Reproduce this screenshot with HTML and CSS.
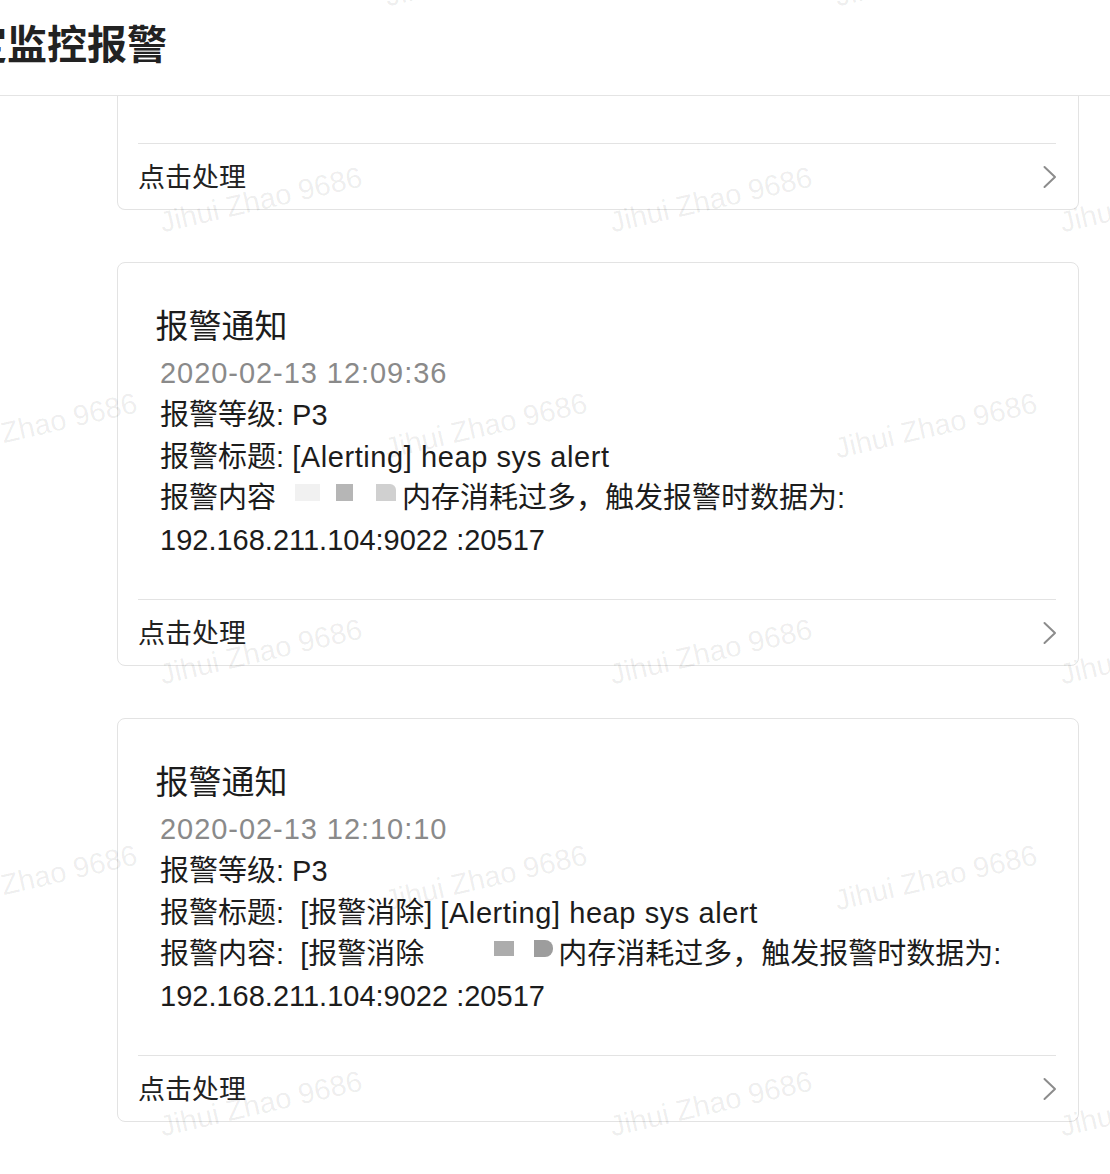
FILE: index.html
```html
<!DOCTYPE html>
<html lang="zh-CN">
<head>
<meta charset="utf-8">
<title>监控报警</title>
<link rel="stylesheet" href="styles.css">
</head>
<body>
<header class="topbar">
  <h1 class="title"><span class="cut">定</span>监控报警</h1>
</header>
<main class="list">
  <section class="card card-partial">
    <div class="card-body card-body-partial"></div>
    <div class="card-foot">
      <span class="foot-text">点击处理</span>
      <svg class="chev" width="14" height="24" viewBox="0 0 14 24"><path d="M1.5 2 L12 12 L1.5 22" fill="none" stroke="#8c8c8c" stroke-width="2" stroke-linecap="round" stroke-linejoin="round"/></svg>
    </div>
  </section>

  <section class="card">
    <div class="card-body">
      <h2 class="card-title">报警通知</h2>
      <p class="time">2020-02-13 12:09:36</p>
      <p class="line">报警等级: P3</p>
      <p class="line">报警标题: <span class="en">[Alerting] heap sys alert</span></p>
      <p class="line">报警内容<span class="mask mask-a"><span class="sq sq-a1"></span><span class="sq sq-a2"></span><span class="sq sq-a3"></span></span>内存消耗过多，触发报警时数据为:</p>
      <p class="line">192.168.211.104:9022 :20517</p>
    </div>
    <div class="card-foot">
      <span class="foot-text">点击处理</span>
      <svg class="chev" width="14" height="24" viewBox="0 0 14 24"><path d="M1.5 2 L12 12 L1.5 22" fill="none" stroke="#8c8c8c" stroke-width="2" stroke-linecap="round" stroke-linejoin="round"/></svg>
    </div>
  </section>

  <section class="card">
    <div class="card-body">
      <h2 class="card-title">报警通知</h2>
      <p class="time">2020-02-13 12:10:10</p>
      <p class="line">报警等级: P3</p>
      <p class="line">报警标题: <span class="tag">[报警消除]</span> <span class="en">[Alerting] heap sys alert</span></p>
      <p class="line">报警内容: <span class="tag">[报警消除</span><span class="mask mask-b"><span class="sq sq-b1"></span><span class="sq sq-b2"></span></span>内存消耗过多，触发报警时数据为:</p>
      <p class="line">192.168.211.104:9022 :20517</p>
    </div>
    <div class="card-foot">
      <span class="foot-text">点击处理</span>
      <svg class="chev" width="14" height="24" viewBox="0 0 14 24"><path d="M1.5 2 L12 12 L1.5 22" fill="none" stroke="#8c8c8c" stroke-width="2" stroke-linecap="round" stroke-linejoin="round"/></svg>
    </div>
  </section>
</main>

<div class="watermarks" aria-hidden="true">
  <span class="wm yb0 xb1">Jihui Zhao 9686</span>
  <span class="wm yb0 xb2">Jihui Zhao 9686</span>
  <span class="wm ya1 xa1">Jihui Zhao 9686</span>
  <span class="wm ya1 xa2">Jihui Zhao 9686</span>
  <span class="wm ya1 xa3">Jihui Zhao 9686</span>
  <span class="wm yb1 xb0">Jihui Zhao 9686</span>
  <span class="wm yb1 xb1">Jihui Zhao 9686</span>
  <span class="wm yb1 xb2">Jihui Zhao 9686</span>
  <span class="wm ya2 xa1">Jihui Zhao 9686</span>
  <span class="wm ya2 xa2">Jihui Zhao 9686</span>
  <span class="wm ya2 xa3">Jihui Zhao 9686</span>
  <span class="wm yb2 xb0">Jihui Zhao 9686</span>
  <span class="wm yb2 xb1">Jihui Zhao 9686</span>
  <span class="wm yb2 xb2">Jihui Zhao 9686</span>
  <span class="wm ya3 xa1">Jihui Zhao 9686</span>
  <span class="wm ya3 xa2">Jihui Zhao 9686</span>
  <span class="wm ya3 xa3">Jihui Zhao 9686</span>
</div>
</body>
</html>
```

FILE: styles.css
```css
* {
  box-sizing: border-box;
  margin: 0;
  padding: 0;
}

html, body {
  background: #ffffff;
}

body {
  position: relative;
  width: 1110px;
  height: 1174px;
  overflow: hidden;
  font-family: "Liberation Sans", "Noto Sans CJK SC", sans-serif;
  color: #1c1c1c;
}

/* header */
.topbar {
  height: 96px;
  border-bottom: 1px solid #e4e4e4;
  display: flex;
  align-items: center;
  overflow: hidden;
}

.title {
  font-size: 40px;
  font-weight: 700;
  line-height: 1;
  white-space: nowrap;
  color: #222222;
  margin-left: -33px;
  padding-bottom: 6px;
}

/* list */
.list {
  display: flex;
  flex-direction: column;
  gap: 52px;
  padding: 0 31px 0 117px;
}

.card {
  background: #ffffff;
  border: 1px solid #e3e3e3;
  border-radius: 8px;
}

.card-partial {
  border-top: none;
  border-top-left-radius: 0;
  border-top-right-radius: 0;
}

.card-body {
  padding: 42px 20px 37.25px 42px;
}

.card-body-partial {
  height: 47px;
  padding: 0;
}

.card-title {
  font-size: 33px;
  font-weight: 400;
  line-height: 44px;
  margin-left: -4.5px;
  margin-bottom: 4px;
  color: #1c1c1c;
}

.time,
.line {
  font-size: 29px;
  line-height: 41.75px;
  white-space: nowrap;
}

.time {
  color: #8a8a8a;
  letter-spacing: 0.95px;
}

.line {
  color: #1c1c1c;
}

.en {
  letter-spacing: 0.58px;
}

.tag {
  margin-left: 8px;
}

/* redacted area */
.mask {
  display: inline-block;
  position: relative;
  height: 18px;
  vertical-align: 6px;
}

.mask-a {
  width: 126px;
}

.mask-b {
  width: 134px;
}

.sq {
  position: absolute;
  top: 0;
  height: 17px;
}

.sq-a1 { left: 19px; width: 25px; background: #f1f1f1; }
.sq-a2 { left: 60px; width: 17px; background: #b6b6b6; }
.sq-a3 { left: 100px; width: 20px; background: #d0d0d0; border-top-right-radius: 6px; }
.sq-b1 { left: 70px; width: 20px; top: 1px; height: 15px; background: #acacac; }
.sq-b2 { left: 110px; width: 19px; background: #9d9d9d; border-top-right-radius: 8px; border-bottom-right-radius: 8px; }

/* footer */
.card-foot {
  height: 66px;
  margin: 0 22px 0 20px;
  border-top: 1px solid #e3e3e3;
  display: flex;
  align-items: center;
  justify-content: space-between;
}

.foot-text {
  font-size: 27px;
  line-height: 1;
  color: #222222;
  margin-top: 4px;
}

.chev {
  display: block;
  margin-right: -1px;
}

/* watermarks */
.watermarks {
  position: absolute;
  inset: 0;
  pointer-events: none;
  overflow: hidden;
}

.wm {
  position: absolute;
  font-family: "Liberation Sans", sans-serif;
  font-size: 29px;
  line-height: 1;
  white-space: nowrap;
  color: rgba(0, 0, 0, 0.075);
  transform: translate(-50%, -50%) rotate(-13deg);
}

.ya1 { top: 200px; }
.ya2 { top: 652px; }
.ya3 { top: 1104px; }
.yb0 { top: -26px; }
.yb1 { top: 426px; }
.yb2 { top: 878px; }

.xa1 { left: 261px; }
.xa2 { left: 711px; }
.xa3 { left: 1161px; }
.xb0 { left: 36px; }
.xb1 { left: 486px; }
.xb2 { left: 936px; }
```
